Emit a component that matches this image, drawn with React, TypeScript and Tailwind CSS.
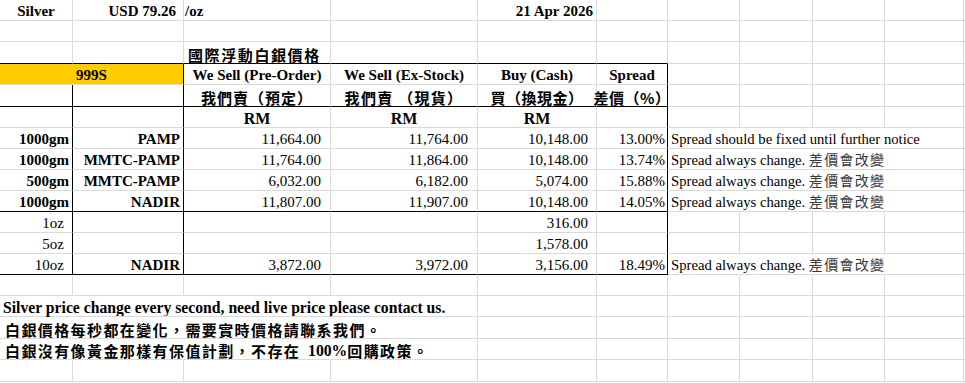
import React from "react";

type RB = "g" | "k" | "n";
type BB = "g" | "k";
type AL = "l" | "r" | "c";

const RBC: Record<RB, string> = {
  g: "border-r-[#dadada]",
  k: "border-r-black",
  n: "border-r-transparent",
};
const BBC: Record<BB, string> = {
  g: "border-b-[#dadada]",
  k: "border-b-black",
};
const ALC: Record<AL, string> = {
  l: "justify-start pl-[3px]",
  r: "justify-end pr-[3px]",
  c: "justify-center",
};

const W = [
  "w-[73px]",
  "w-[111px]",
  "w-[147px]",
  "w-[147px]",
  "w-[119px]",
  "w-[71px]",
  "w-[72px]",
  "w-[73px]",
  "w-[72px]",
  "w-[79px]",
];

function Cell({
  w,
  r = "g",
  b = "g",
  a = "l",
  bold = false,
  className = "",
  children,
}: {
  w: string;
  r?: RB;
  b?: BB;
  a?: AL;
  bold?: boolean;
  className?: string;
  children?: React.ReactNode;
}) {
  return (
    <div
      className={`flex items-end shrink-0 h-full whitespace-nowrap overflow-visible border-r border-b ${w} ${RBC[r]} ${BBC[b]} ${ALC[a]} ${bold ? "font-bold" : "font-normal"} ${className}`}
    >
      {children}
    </div>
  );
}

function Row({ h, children }: { h: string; children?: React.ReactNode }) {
  return <div className={`flex w-full ${h}`}>{children}</div>;
}

function Tail({ from = 0 }: { from?: number }) {
  const cells = [];
  for (let i = from; i < 10; i++) {
    cells.push(<Cell key={i} w={W[i]} />);
  }
  cells.push(<div key="k" className="flex-1 h-full border-b border-b-[#dadada]" />);
  return <>{cells}</>;
}

const CJK = "font-['Noto_Sans_CJK_TC',sans-serif]";

function Note({ first }: { first?: boolean }) {
  return (
    <span className="text-[14.7px]">
      {first ? (
        "Spread should be fixed until further notice"
      ) : (
        <>
          Spread always change.{" "}
          <span className="text-[#3a3a3a] tracking-[1.3px] font-['Noto_Sans_CJK_TC',sans-serif] text-[14px]">
            差價會改變
          </span>
        </>
      )}
    </span>
  );
}

type DataRow = {
  a: string;
  aBold: boolean;
  aPad?: string;
  b: string;
  c: string;
  d: string;
  e: string;
  f: string;
  note?: "first" | "other";
  bottom?: BB;
};

const data: DataRow[] = [
  { a: "1000gm", aBold: true, b: "PAMP", c: "11,664.00", d: "11,764.00", e: "10,148.00", f: "13.00%", note: "first" },
  { a: "1000gm", aBold: true, b: "MMTC-PAMP", c: "11,764.00", d: "11,864.00", e: "10,148.00", f: "13.74%", note: "other" },
  { a: "500gm", aBold: true, b: "MMTC-PAMP", c: "6,032.00", d: "6,182.00", e: "5,074.00", f: "15.88%", note: "other" },
  { a: "1000gm", aBold: true, b: "NADIR", c: "11,807.00", d: "11,907.00", e: "10,148.00", f: "14.05%", note: "other", bottom: "k" },
  { a: "1oz", aBold: false, aPad: "!pr-[8px]", b: "", c: "", d: "", e: "316.00", f: "" },
  { a: "5oz", aBold: false, aPad: "!pr-[8px]", b: "", c: "", d: "", e: "1,578.00", f: "" },
  { a: "10oz", aBold: false, aPad: "!pr-[8px]", b: "NADIR", c: "3,872.00", d: "3,972.00", e: "3,156.00", f: "18.49%", note: "other", bottom: "k" },
];

export default function App() {
  return (
    <div className="w-[965px] h-[383px] overflow-hidden bg-white text-black text-[15px] leading-[17px] font-['Liberation_Serif',serif]">
      {/* Row 0 */}
      <Row h="h-[21px]">
        <Cell w={W[0]} a="c" bold>
          Silver
        </Cell>
        <Cell w={W[1]} a="r" bold className="!pr-[7px]">
          USD 79.26
        </Cell>
        <Cell w={W[2]} a="l" bold className="!pl-[1px]">
          /oz
        </Cell>
        <Cell w={W[3]} />
        <Cell w={W[4]} a="r" bold>
          21 Apr 2026
        </Cell>
        <Tail from={5} />
      </Row>
      {/* Row 1 */}
      <Row h="h-[21px]">
        <Tail from={0} />
      </Row>
      {/* Row 2 */}
      <Row h="h-[22px]">
        <Cell w={W[0]} b="k" />
        <Cell w={W[1]} b="k" />
        <Cell w={W[2]} b="k" bold className={`${CJK} tracking-[1.6px] text-[15px] !pl-[4px]`}>
          國際浮動白銀價格
        </Cell>
        <Cell w={W[3]} b="k" />
        <Cell w={W[4]} b="k" />
        <Cell w={W[5]} b="k" />
        <Tail from={6} />
      </Row>
      {/* Row 3 */}
      <Row h="h-[21px]">
        <Cell w="w-[184px]" r="k" a="c" bold className="bg-[#ffcc00]">
          999S
        </Cell>
        <Cell w={W[2]} a="c" bold>
          We Sell (Pre-Order)
        </Cell>
        <Cell w={W[3]} a="c" bold>
          We Sell (Ex-Stock)
        </Cell>
        <Cell w={W[4]} a="c" bold>
          Buy (Cash)
        </Cell>
        <Cell w={W[5]} r="k" a="c" bold>
          Spread
        </Cell>
        <Tail from={6} />
      </Row>
      {/* Row 4 */}
      <Row h="h-[22px]">
        <Cell w={W[0]} r="k" b="k" />
        <Cell w={W[1]} r="k" b="k" />
        <Cell w={W[2]} b="k" a="c" bold className={`${CJK} tracking-[1px]`}>
          我們賣（預定）
        </Cell>
        <Cell w={W[3]} b="k" a="c" bold className={`${CJK} tracking-[1.3px]`}>
          我們賣 （現貨）
        </Cell>
        <Cell w={W[4]} b="k" a="c" bold className={`${CJK} tracking-[0.5px]`}>
          買（換現金）
        </Cell>
        <Cell w={W[5]} r="k" b="k" a="c" bold className={`${CJK} tracking-[0.5px]`}>
          差價（%）
        </Cell>
        <Tail from={6} />
      </Row>
      {/* Row 5 */}
      <Row h="h-[21px]">
        <Cell w={W[0]} r="k" />
        <Cell w={W[1]} r="k" />
        <Cell w={W[2]} a="c" bold className="text-[16px]">
          RM
        </Cell>
        <Cell w={W[3]} a="c" bold className="text-[16px]">
          RM
        </Cell>
        <Cell w={W[4]} a="c" bold className="text-[16px]">
          RM
        </Cell>
        <Cell w={W[5]} r="k" />
        <Tail from={6} />
      </Row>
      {/* Data rows */}
      {data.map((d, i) => (
        <Row key={i} h="h-[21px]">
          <Cell w={W[0]} r="k" b={d.bottom ?? "g"} a="r" bold={d.aBold} className={d.aPad ?? ""}>
            {d.a}
          </Cell>
          <Cell w={W[1]} r="k" b={d.bottom ?? "g"} a="r" bold>
            {d.b}
          </Cell>
          <Cell w={W[2]} b={d.bottom ?? "g"} a="r" className="!pr-[9px]">
            {d.c}
          </Cell>
          <Cell w={W[3]} b={d.bottom ?? "g"} a="r" className="!pr-[9px]">
            {d.d}
          </Cell>
          <Cell w={W[4]} b={d.bottom ?? "g"} a="r" className="!pr-[8px]">
            {d.e}
          </Cell>
          <Cell w={W[5]} r="k" b={d.bottom ?? "g"} a="r" className="!pr-[2px]">
            {d.f}
          </Cell>
          {d.note ? (
            <>
              <Cell w={W[6]} r="n">
                <Note first={d.note === "first"} />
              </Cell>
              <Cell w={W[7]} r="n" />
              <Cell w={W[8]} r="n" />
              <Cell w={W[9]} />
              <div className="flex-1 h-full border-b border-b-[#dadada]" />
            </>
          ) : (
            <Tail from={6} />
          )}
        </Row>
      ))}
      {/* Row 13 */}
      <Row h="h-[21px]">
        <Tail from={0} />
      </Row>
      {/* Row 14 */}
      <Row h="h-[21px]">
        <Cell w={W[0]} r="n" bold className="text-[15.7px]">
          Silver price change every second, need live price please contact us.
        </Cell>
        <Cell w={W[1]} r="n" />
        <Cell w={W[2]} r="n" />
        <Tail from={3} />
      </Row>
      {/* Row 15 */}
      <Row h="h-[22px]">
        <Cell w={W[0]} r="n" bold className={`${CJK} tracking-[1.4px] text-[15px] !pl-[5px]`}>
          白銀價格每秒都在變化，需要實時價格請聯系我們。
        </Cell>
        <Cell w={W[1]} r="n" />
        <Cell w={W[2]} r="n" />
        <Tail from={3} />
      </Row>
      {/* Row 16 */}
      <Row h="h-[21px]">
        <Cell w={W[0]} r="n" bold className="text-[15px] !pl-[5px]">
          <span className={`${CJK} tracking-[1.4px]`}>白銀沒有像黃金那樣有保值計劃，不存在</span>
          <span className="text-[15.7px]">&nbsp; 100%</span>
          <span className={`${CJK} tracking-[1.4px]`}>回購政策。</span>
        </Cell>
        <Cell w={W[1]} r="n" />
        <Cell w={W[2]} r="n" />
        <Tail from={3} />
      </Row>
      {/* Row 17 */}
      <Row h="h-[22px]">
        <Tail from={0} />
      </Row>
    </div>
  );
}
